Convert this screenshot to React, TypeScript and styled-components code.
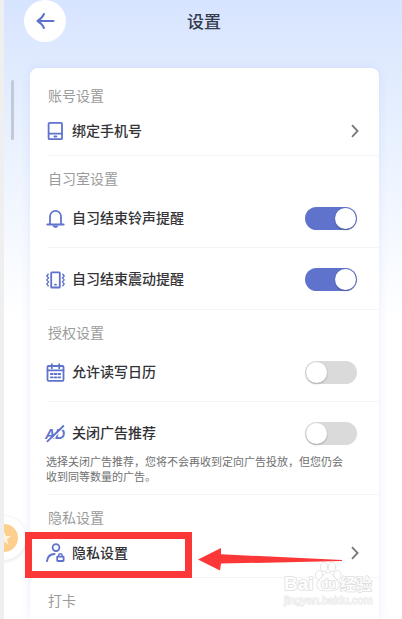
import React, { useId, useState } from "react";
import styled, { createGlobalStyle, css } from "styled-components";

const accent = "#6073cc";
const fontStack = '"Noto Sans CJK SC", "Noto Sans", sans-serif';

const GlobalStyle = createGlobalStyle`
  *, *::before, *::after { box-sizing: border-box; }
  body { margin: 0; background: #fff; font-family: ${fontStack}; }
`;

const Screen = styled.main`
  position: relative;
  display: flex;
  flex-direction: column;
  min-height: 100vh;
  overflow: hidden;
  border-left: 4px solid #efefef;
  background: linear-gradient(#d7e4ff 0, #dfeafe 60px, #edf4ff 170px, #fff 320px);
`;

const Header = styled.header`
  display: grid;
  grid-template-columns: 42px 1fr 42px;
  align-items: center;
  padding: 0 18px 26px 20px;
`;

const BackButton = styled.button`
  display: grid;
  place-items: center;
  width: 42px;
  height: 42px;
  padding: 0;
  border: 0;
  border-radius: 50%;
  background: #fff;
  color: ${accent};
  cursor: pointer;
`;

const Title = styled.h1`
  margin: 0;
  color: #343b4c;
  font-size: 17px;
  line-height: 24px;
  font-weight: 500;
  text-align: center;
`;

const Card = styled.div`
  flex: 1;
  margin: 0 23px 0 26px;
  padding: 5px 0 7px 16px;
  border-radius: 8px 8px 0 0;
  background: #fff;
  box-shadow: 0 0 10px rgba(150, 170, 250, 0.2);
`;

const Section = styled.section`
  padding-top: 12px;
`;

const SectionTitle = styled.h2`
  margin: 0;
  padding: 0 0 1px 2px;
  color: #9b9b9b;
  font-size: 14px;
  line-height: 20px;
  font-weight: 400;
`;

const Divider = styled.hr`
  height: 1px;
  margin: 0 0 0 2px;
  border: 0;
  background: #f3f4f6;
`;

type RowSpace = "first" | "next" | "noted";
const rowPadding: Record<RowSpace, string> = {
  first: "18px 22px 17px 0",
  next: "20px 22px 18px 0",
  noted: "20px 22px 9px 0",
};

const rowBase = css`
  display: flex;
  align-items: center;
  gap: 8px;
  color: #333336;
  font-size: 14px;
  line-height: 21px;
  font-weight: 500;
`;

const ToggleRow = styled.div<{ $space: RowSpace }>`
  ${rowBase}
  padding: ${(p) => rowPadding[p.$space]};
`;

const LinkRow = styled.a`
  ${rowBase}
  padding: 14px 20px 14px 0;
  text-decoration: none;
`;

const RowLabel = styled.label`
  flex: 1;
  padding-bottom: 2px;
`;

const LinkText = styled.span`
  flex: 1;
`;

const Switch = styled.input`
  appearance: none;
  flex: none;
  width: 52px;
  height: 23px;
  margin: 0;
  padding: 1px;
  border-radius: 12px;
  background: #dadada;
  cursor: pointer;

  &::before {
    content: "";
    display: block;
    width: 21px;
    height: 21px;
    border-radius: 50%;
    background: #fff;
    box-shadow: 0 1px 2px rgba(0, 0, 0, 0.25);
  }

  &:checked {
    background: ${accent};
  }

  &:checked::before {
    margin-left: auto;
  }
`;

const Note = styled.p`
  margin: 0;
  padding: 0 30px 10px 0;
  color: #707070;
  font-size: 11px;
  line-height: 15px;
`;

const RowIcon = styled.svg`
  flex: none;
  width: 18px;
  height: 20px;
  overflow: visible;
  fill: none;
  stroke: ${accent};
  stroke-width: 1.8;
  stroke-linecap: round;
  stroke-linejoin: round;
`;

const IconText = styled.text`
  fill: ${accent};
  stroke: none;
  font: italic 700 14px "Liberation Sans", sans-serif;
`;

const ChevronIcon = styled.svg`
  flex: none;
  width: 8px;
  height: 14px;
  fill: none;
  stroke: #777;
  stroke-width: 1.8;
`;

const Highlighted = styled.div`
  position: relative;
`;

const Frame = styled.div`
  position: absolute;
  top: 4px;
  left: -21px;
  width: 167px;
  height: 46px;
  border: 7px solid #fb3837;
  pointer-events: none;
`;

const Arrow = styled.svg`
  position: absolute;
  top: 20px;
  left: 152px;
  width: 145px;
  height: 23px;
  fill: #fb3837;
  pointer-events: none;
`;

const ScrollThumb = styled.div`
  position: absolute;
  top: 80px;
  left: 7px;
  width: 3px;
  height: 60px;
  border-radius: 2px;
  background: #c1cad6;
`;

const FloatingBadge = styled.button`
  position: absolute;
  top: 516px;
  left: -22px;
  display: grid;
  place-items: center;
  width: 44px;
  height: 44px;
  padding: 0;
  border: 0;
  border-radius: 50%;
  background: #fff;
  box-shadow: 0 1px 4px rgba(0, 0, 0, 0.12);
`;

const Watermark = styled.svg`
  position: absolute;
  right: 26px;
  bottom: 10px;
  width: 94px;
  height: 48px;
  overflow: visible;
  fill: #fff;
  stroke: #dedede;
  stroke-width: 1.6;
  stroke-linejoin: round;
  paint-order: stroke;
  pointer-events: none;
`;

const LatinMark = styled.text<{ $size: number }>`
  font: 700 ${(p) => p.$size}px "Liberation Sans", sans-serif;
`;

const HanMark = styled.text`
  font: 500 16px ${fontStack};
`;

const UrlMark = styled.text`
  fill: #f8f8f8;
  stroke: #e4e4e4;
  stroke-width: 1;
  font: 400 11px "Liberation Sans", sans-serif;
`;

const PhoneIcon = () => (
  <RowIcon viewBox="0 0 18 20" aria-hidden>
    <rect x="2.6" y="1.8" width="13.4" height="16.4" rx="1" />
    <path d="M3 12.7h13" />
    <path d="M8.4 15.5h2" />
  </RowIcon>
);

const BellIcon = () => (
  <RowIcon viewBox="0 0 18 20" aria-hidden>
    <path d="M4 15V7.6a5.5 5.8 0 0 1 11 0V15" />
    <path d="M1.3 15.5h16.4" />
    <path d="M7.2 17h4.6a2.4 2 0 0 1-4.6 0z" fill={accent} strokeWidth="1" />
  </RowIcon>
);

const VibrateIcon = () => (
  <RowIcon viewBox="0 0 18 20" aria-hidden>
    <rect x="5.2" y="2.3" width="8.6" height="15.2" rx="0.6" />
    <path d="M9 14.6h1" />
    <path
      d="M2.2 4.2.8 6l1.8 1.9-1.8 2 1.8 2-1.8 2 1.4 1.8M16.8 4.2 18.2 6l-1.8 1.9 1.8 2-1.8 2 1.8 2-1.4 1.8"
      strokeWidth="1.4"
    />
  </RowIcon>
);

const CalendarIcon = () => (
  <RowIcon viewBox="0 0 18 20" aria-hidden>
    <rect x="1.5" y="3" width="16" height="14.8" rx="1" />
    <path d="M1.5 7.4h16M5.8 1.2v4M13.2 1.2v4" />
    <path d="M4.8 11h1.8M8.6 11h1.8M12.4 11h1.8M4.8 14.4h1.8M8.6 14.4h1.8M12.4 14.4h1.8" />
  </RowIcon>
);

const NoAdsIcon = () => (
  <RowIcon viewBox="0 0 18 20" aria-hidden>
    <IconText x="-1" y="15">AD</IconText>
    <path d="M2.6 18.2 18.4 3.2" stroke="#fff" strokeWidth="1.2" />
    <path d="M1.4 17.4 17.4 2" />
  </RowIcon>
);

const PrivacyIcon = () => (
  <RowIcon viewBox="0 0 18 20" aria-hidden>
    <circle cx="10" cy="4.6" r="3.4" />
    <path d="M1 18c.6-4.4 3.2-6.7 7.5-6.9" strokeWidth="2" />
    <rect x="11.2" y="13.6" width="6.4" height="4.4" rx="0.5" />
    <path d="M12.6 13.4v-.8a1.8 1.8 0 0 1 3.6 0v.8" strokeWidth="1.4" />
  </RowIcon>
);

const Chevron = () => (
  <ChevronIcon viewBox="0 0 8 14" aria-hidden>
    <path d="M1 1.2 6.6 7 1 12.8" />
  </ChevronIcon>
);

interface ToggleItemProps {
  icon: React.ReactNode;
  label: string;
  initial?: boolean;
  space: RowSpace;
}

function ToggleItem({ icon, label, initial = false, space }: ToggleItemProps) {
  const id = useId();
  const [on, setOn] = useState(initial);
  return (
    <ToggleRow $space={space}>
      {icon}
      <RowLabel htmlFor={id}>{label}</RowLabel>
      <Switch
        id={id}
        type="checkbox"
        role="switch"
        checked={on}
        onChange={(e) => setOn(e.target.checked)}
      />
    </ToggleRow>
  );
}

function LinkItem({ icon, label, href }: { icon: React.ReactNode; label: string; href: string }) {
  return (
    <LinkRow href={href}>
      {icon}
      <LinkText>{label}</LinkText>
      <Chevron />
    </LinkRow>
  );
}

export default function App() {
  return (
    <>
      <GlobalStyle />
      <Screen>
        <Header>
          <BackButton type="button" aria-label="返回">
            <svg width="19" height="18" viewBox="0 0 19 18" fill="none" stroke="currentColor" strokeWidth="2" strokeLinecap="round" strokeLinejoin="round">
              <path d="M17.5 9H2M8 2C6.5 5 4.5 7.5 1.5 9 4.5 10.5 6.5 13 8 16" />
            </svg>
          </BackButton>
          <Title>设置</Title>
        </Header>

        <ScrollThumb />
        <FloatingBadge type="button" aria-label="收藏">
          <svg width="28" height="28" viewBox="0 0 28 28" aria-hidden>
            <circle cx="14" cy="14" r="14" fill="#fdcf8f" />
            <path d="m14 7 2 5h5l-4 3.5 1.5 5-4.5-3-4.5 3 1.5-5L7 12h5z" fill="#fff3df" />
          </svg>
        </FloatingBadge>

        <Card>
          <Section>
            <SectionTitle>账号设置</SectionTitle>
            <LinkItem icon={<PhoneIcon />} label="绑定手机号" href="#phone" />
            <Divider />
          </Section>

          <Section>
            <SectionTitle>自习室设置</SectionTitle>
            <ToggleItem icon={<BellIcon />} label="自习结束铃声提醒" initial space="first" />
            <Divider />
            <ToggleItem icon={<VibrateIcon />} label="自习结束震动提醒" initial space="next" />
            <Divider />
          </Section>

          <Section>
            <SectionTitle>授权设置</SectionTitle>
            <ToggleItem icon={<CalendarIcon />} label="允许读写日历" space="first" />
            <Divider />
            <ToggleItem icon={<NoAdsIcon />} label="关闭广告推荐" space="noted" />
            <Note>选择关闭广告推荐，您将不会再收到定向广告投放，但您仍会收到同等数量的广告。</Note>
            <Divider />
          </Section>

          <Section>
            <SectionTitle>隐私设置</SectionTitle>
            <Highlighted>
              <LinkItem icon={<PrivacyIcon />} label="隐私设置" href="#privacy" />
              <Frame />
              <Arrow viewBox="0 0 145 23" aria-hidden>
                <path d="M0 11.5 23 0v6.3L144 12v1L23 15.6 22 22.5z" />
              </Arrow>
            </Highlighted>
            <Divider />
          </Section>

          <Section>
            <SectionTitle>打卡</SectionTitle>
          </Section>
        </Card>

        <Watermark viewBox="0 0 94 48">
          <LatinMark $size={19} x="2" y="29">Bai</LatinMark>
          <ellipse cx="37" cy="14" rx="3.2" ry="4" />
          <ellipse cx="42" cy="6" rx="3.2" ry="4.2" />
          <ellipse cx="50" cy="6" rx="3.2" ry="4.2" />
          <ellipse cx="55.5" cy="14" rx="3.2" ry="4" />
          <path d="M46 12c4 0 5 3.5 7.5 6s4 4 3 7.5-3.5 4-10.5 4-9.5-.5-10.5-4 .5-5 3-7.5S42 12 46 12z" />
          <LatinMark $size={12} x="39" y="27">du</LatinMark>
          <HanMark x="58" y="29">经验</HanMark>
          <UrlMark x="2" y="43">jingyan.baidu.com</UrlMark>
        </Watermark>
      </Screen>
    </>
  );
}
